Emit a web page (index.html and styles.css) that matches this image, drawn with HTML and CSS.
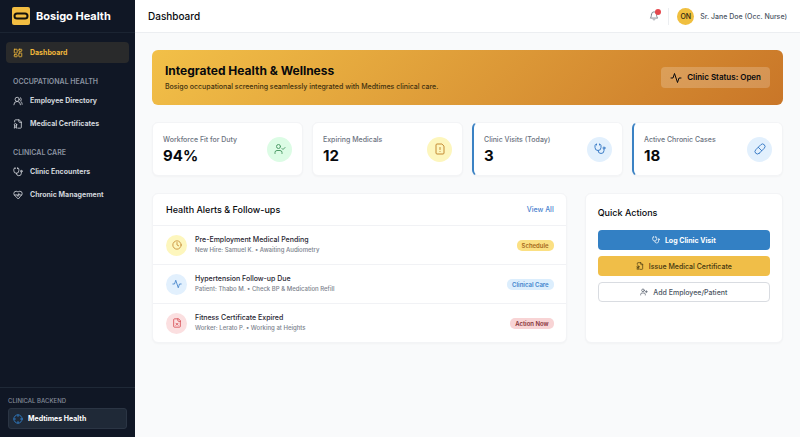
FILE: index.html
```html
<!DOCTYPE html>
<html lang="en">
<head>
<meta charset="utf-8">
<meta name="viewport" content="width=device-width, initial-scale=1">
<title>Bosigo Health</title>
<link rel="stylesheet" href="styles.css">
</head>
<body>
<svg class="sprite" aria-hidden="true">
  <symbol id="dashboard" viewBox="0 0 24 24"><rect x="3" y="3" width="7" height="9" rx="1"/><rect x="14" y="3" width="7" height="5" rx="1"/><rect x="14" y="12" width="7" height="9" rx="1"/><rect x="3" y="16" width="7" height="5" rx="1"/></symbol>
  <symbol id="users" viewBox="0 0 24 24"><path d="M18 21a8 8 0 0 0-16 0"/><circle cx="10" cy="8" r="5"/><path d="M22 20c0-3.370-2-6.500-4-8a5 5 0 0 0-.45-8.300"/></symbol>
  <symbol id="certificate" viewBox="0 0 24 24"><path d="M4 7V4a2 2 0 0 1 2-2h9l5 5v13a2 2 0 0 1-2 2h-6"/><path d="M14 2v4a2 2 0 0 0 2 2h4"/><circle cx="6" cy="14" r="3"/><path d="M8 16.500 9 22l-3-1.500L3 22l1-5.500"/></symbol>
  <symbol id="stethoscope" viewBox="0 0 24 24"><path d="M11 2v2M5 2v2M5 3H4a2 2 0 0 0-2 2v4a6 6 0 0 0 12 0V5a2 2 0 0 0-2-2h-1"/><path d="M8 15a6 6 0 0 0 12 0v-3"/><circle cx="20" cy="10" r="2"/></symbol>
  <symbol id="heart-pulse" viewBox="0 0 24 24"><path d="M19 14c1.490-1.460 3-3.210 3-5.500A5.500 5.500 0 0 0 16.500 3c-1.760 0-3 .5-4.500 2-1.500-1.500-2.740-2-4.500-2A5.500 5.500 0 0 0 2 8.500c0 2.300 1.500 4.050 3 5.500l7 7Z"/><path d="M3.220 12H9.500l.5-1 2 4.500 2-7 1.500 3.500h5.270"/></symbol>
  <symbol id="crosshair" viewBox="0 0 24 24"><circle cx="12" cy="12" r="10"/><path d="M22 12h-4M6 12H2M12 6V2M12 22v-4"/></symbol>
  <symbol id="bell" viewBox="0 0 24 24"><path d="M6 8a6 6 0 0 1 12 0c0 7 3 9 3 9H3s3-2 3-9"/><path d="M10.300 21a1.940 1.940 0 0 0 3.400 0"/></symbol>
  <symbol id="activity" viewBox="0 0 24 24"><path d="M22 12h-4l-3 9L9 3l-3 9H2"/></symbol>
  <symbol id="user-check" viewBox="0 0 24 24"><path d="M16 21v-2a4 4 0 0 0-4-4H6a4 4 0 0 0-4 4v2"/><circle cx="9" cy="7" r="4"/><path d="m16 11 2 2 4-4"/></symbol>
  <symbol id="user-plus" viewBox="0 0 24 24"><path d="M16 21v-2a4 4 0 0 0-4-4H6a4 4 0 0 0-4 4v2"/><circle cx="9" cy="7" r="4"/><path d="M19 8v6M22 11h-6"/></symbol>
  <symbol id="file-warning" viewBox="0 0 24 24"><path d="M15 2H6a2 2 0 0 0-2 2v16a2 2 0 0 0 2 2h12a2 2 0 0 0 2-2V7Z"/><path d="M12 9v4M12 17h.01"/></symbol>
  <symbol id="file-x" viewBox="0 0 24 24"><path d="M15 2H6a2 2 0 0 0-2 2v16a2 2 0 0 0 2 2h12a2 2 0 0 0 2-2V7Z"/><path d="M14 2v4a2 2 0 0 0 2 2h4M14.500 12.500l-5 5M9.500 12.500l5 5"/></symbol>
  <symbol id="pill" viewBox="0 0 24 24"><path d="m10.500 20.500 10-10a4.950 4.950 0 1 0-7-7l-10 10a4.950 4.950 0 1 0 7 7Z"/><path d="m8.500 8.500 7 7"/></symbol>
  <symbol id="clock" viewBox="0 0 24 24"><circle cx="12" cy="12" r="10"/><path d="M12 6v6l4 2"/></symbol>
</svg>

<div class="app">
  <aside class="sidebar">
    <div class="brand">
      <svg class="logo" viewBox="0 0 18 18" aria-hidden="true"><rect class="logo-tile" width="18" height="18" rx="2"/><rect class="logo-ring" x="2.500" y="6.500" width="13" height="5" rx="2.500"/></svg>
      <span>Bosigo Health</span>
    </div>
    <nav class="nav">
      <a class="nav-link active" href="#"><svg class="icon"><use href="#dashboard"/></svg>Dashboard</a>
      <h2 class="nav-label">OCCUPATIONAL HEALTH</h2>
      <a class="nav-link" href="#"><svg class="icon"><use href="#users"/></svg>Employee Directory</a>
      <a class="nav-link" href="#"><svg class="icon"><use href="#certificate"/></svg>Medical Certificates</a>
      <h2 class="nav-label">CLINICAL CARE</h2>
      <a class="nav-link" href="#"><svg class="icon"><use href="#stethoscope"/></svg>Clinic Encounters</a>
      <a class="nav-link" href="#"><svg class="icon"><use href="#heart-pulse"/></svg>Chronic Management</a>
    </nav>
    <div class="backend">
      <span class="backend-label">CLINICAL BACKEND</span>
      <a class="backend-link" href="#"><svg class="icon"><use href="#crosshair"/></svg>Medtimes Health</a>
    </div>
  </aside>

  <div class="page">
    <header class="topbar">
      <h1>Dashboard</h1>
      <div class="account">
        <button class="bell" type="button" aria-label="Notifications"><svg class="icon"><use href="#bell"/></svg><span class="dot"></span></button>
        <div class="user"><span class="avatar">ON</span><span>Sr. Jane Doe (Occ. Nurse)</span></div>
      </div>
    </header>

    <main class="content">
      <section class="banner">
        <div>
          <h2>Integrated Health &amp; Wellness</h2>
          <p>Bosigo occupational screening seamlessly integrated with Medtimes clinical care.</p>
        </div>
        <div class="status"><svg class="icon"><use href="#activity"/></svg>Clinic Status: Open</div>
      </section>

      <section class="stats">
        <article class="card stat"><div><h3>Workforce Fit for Duty</h3><p>94%</p></div><span class="badge green"><svg class="icon"><use href="#user-check"/></svg></span></article>
        <article class="card stat"><div><h3>Expiring Medicals</h3><p>12</p></div><span class="badge yellow"><svg class="icon"><use href="#file-warning"/></svg></span></article>
        <article class="card stat accent"><div><h3>Clinic Visits (Today)</h3><p>3</p></div><span class="badge blue"><svg class="icon"><use href="#stethoscope"/></svg></span></article>
        <article class="card stat accent"><div><h3>Active Chronic Cases</h3><p>18</p></div><span class="badge blue"><svg class="icon"><use href="#pill"/></svg></span></article>
      </section>

      <div class="panels">
        <section class="card alerts">
          <header class="alerts-head"><h2>Health Alerts &amp; Follow-ups</h2><a href="#">View All</a></header>
          <ul>
            <li><span class="badge yellow"><svg class="icon"><use href="#clock"/></svg></span><div class="alert-text"><h3>Pre-Employment Medical Pending</h3><p>New Hire: Samuel K. • Awaiting Audiometry</p></div><span class="tag tag-yellow">Schedule</span></li>
            <li><span class="badge blue"><svg class="icon"><use href="#activity"/></svg></span><div class="alert-text"><h3>Hypertension Follow-up Due</h3><p>Patient: Thabo M. • Check BP &amp; Medication Refill</p></div><span class="tag tag-blue">Clinical Care</span></li>
            <li><span class="badge red"><svg class="icon"><use href="#file-x"/></svg></span><div class="alert-text"><h3>Fitness Certificate Expired</h3><p>Worker: Lerato P. • Working at Heights</p></div><span class="tag tag-red">Action Now</span></li>
          </ul>
        </section>
        <section class="card actions">
          <h2>Quick Actions</h2>
          <button class="btn primary" type="button"><svg class="icon"><use href="#stethoscope"/></svg>Log Clinic Visit</button>
          <button class="btn gold" type="button"><svg class="icon"><use href="#certificate"/></svg>Issue Medical Certificate</button>
          <button class="btn plain" type="button"><svg class="icon"><use href="#user-plus"/></svg>Add Employee/Patient</button>
        </section>
      </div>
    </main>
  </div>
</div>
</body>
</html>
```
FILE: styles.css
```css
*, *::before, *::after { box-sizing: border-box; }
body {
  margin: 0;
  background: #f9fafb;
  color: #07090d;
  font: 500 7px/11px Inter, "Liberation Sans", sans-serif;
}
h1, h2, h3, p, ul { margin: 0; padding: 0; }
ul { list-style: none; }
a { color: inherit; text-decoration: none; }
button { font: inherit; cursor: pointer; }
.sprite { position: absolute; width: 0; height: 0; }
.icon {
  flex: none;
  width: 10px;
  height: 10px;
  fill: none;
  stroke: currentColor;
  stroke-width: 2;
  stroke-linecap: round;
  stroke-linejoin: round;
}

.app { display: grid; grid-template-columns: 135px 1fr; min-height: 100vh; }

/* Sidebar */
.sidebar { display: flex; flex-direction: column; background: #101725; color: #d1d5db; }
.brand {
  display: flex;
  align-items: center;
  gap: 6px;
  height: 33px;
  padding: 0 12px;
  border-bottom: 1px solid #1b2432;
  color: #fff;
  font-size: 11px;
  font-weight: 700;
}
.logo { width: 18px; height: 18px; }
.logo-tile { fill: #f2bd42; }
.logo-ring { fill: #f2bd42; stroke: #14120c; stroke-width: 2; }
.nav { display: flex; flex-direction: column; gap: 2px; padding: 9px 6px; }
.nav-link {
  display: flex;
  align-items: center;
  gap: 7px;
  height: 21px;
  padding: 0 7px;
  border-radius: 4px;
  font-weight: 700;
}
.nav-link.active { background: #292a2b; color: #f2b93b; }
.nav-label {
  padding: 12px 7px 1px;
  color: #8b93a1;
  font-size: 7px;
  line-height: 10px;
  font-weight: 600;
}
.backend {
  display: flex;
  flex-direction: column;
  gap: 2px;
  margin-top: auto;
  padding: 7px 8px 8px;
  border-top: 1px solid #1f2937;
}
.backend-label { color: #848c9a; font-size: 6px; }
.backend-link {
  display: flex;
  align-items: center;
  gap: 5px;
  height: 21px;
  padding: 0 4px;
  border: 1px solid #2b3544;
  border-radius: 3px;
  background: #1f2937;
  color: #fff;
  font-weight: 700;
}
.backend-link .icon { color: #3182ce; }

/* Top bar */
.topbar {
  display: flex;
  align-items: center;
  justify-content: space-between;
  height: 33px;
  padding: 0 13px;
  border-bottom: 1px solid #eceef1;
  background: #fff;
}
.topbar h1 { font-size: 10px; font-weight: 500; }
.account { display: flex; align-items: center; gap: 9px; }
.bell { position: relative; display: flex; padding: 0; border: 0; background: none; color: #737982; }
.dot { position: absolute; top: -2px; right: -2px; width: 6px; height: 6px; border-radius: 50%; background: #e5484d; }
.user {
  display: flex;
  align-items: center;
  gap: 6px;
  padding-left: 8px;
  border-left: 1px solid #eceef1;
  color: #4b5563;
}
.avatar {
  display: grid;
  place-items: center;
  width: 17px;
  height: 17px;
  border-radius: 50%;
  background: #f0bf3f;
  color: #2b2410;
}

/* Content */
.content { display: flex; flex-direction: column; gap: 17px; padding: 17px; }
.banner {
  display: flex;
  align-items: center;
  justify-content: space-between;
  min-height: 55px;
  padding: 12px 13px;
  border-radius: 6px;
  background: linear-gradient(135deg, #f2c048, #c97628);
}
.banner h2 { font-size: 12px; line-height: 18px; font-weight: 700; }
.banner p { color: #40300f; line-height: 13px; }
.status {
  display: flex;
  align-items: center;
  gap: 5px;
  height: 21px;
  padding: 0 9px;
  border-radius: 4px;
  background: rgb(255 255 255 / 20%);
  font-size: 8px;
  font-weight: 600;
}
.status .icon { width: 12px; height: 12px; }

.card {
  border: 1px solid #f3f4f6;
  border-radius: 6px;
  background: #fff;
  box-shadow: 0 1px 2px rgb(0 0 0 / 3%);
}
.stats { display: grid; grid-template-columns: repeat(4, 1fr); gap: 9px; }
.stat { display: flex; align-items: center; justify-content: space-between; height: 54px; padding: 0 10px; }
.stat.accent { border-left: 2px solid #3b82c4; }
.stat h3 { color: #6b7280; font-size: 7px; line-height: 13px; font-weight: 500; }
.stat p { font-size: 15px; line-height: 20px; font-weight: 700; }
.badge { display: grid; flex: none; place-items: center; width: 21px; height: 21px; border-radius: 50%; }
.stat .badge { width: 25px; height: 25px; }
.stat .icon { width: 12px; height: 12px; }
.green { background: #dcfce5; color: #4f9d69; }
.yellow { background: #fdf6bd; color: #c48a32; }
.blue { background: #e2f0fd; color: #3f7fc8; }
.red { background: #fbdfe0; color: #d64b50; }

.panels { display: grid; grid-template-columns: repeat(3, 1fr); gap: 18px; }
.alerts { grid-column: span 2; }
.alerts-head {
  display: flex;
  align-items: center;
  justify-content: space-between;
  height: 31px;
  padding: 0 12px 0 13px;
}
.alerts h2, .actions h2 { font-size: 9px; line-height: 14px; font-weight: 500; }
.alerts-head a { color: #4a7fce; }
.alerts li {
  display: flex;
  align-items: center;
  gap: 8px;
  min-height: 39px;
  padding: 0 12px 0 13px;
  border-top: 1px solid #f1f2f5;
}
.alert-text { flex: 1; }
.alert-text h3 { color: #1f2430; font-size: 7px; line-height: 10px; font-weight: 500; }
.alert-text p { color: #7b818c; font-size: 6px; line-height: 10px; }
.tag { padding: 0 5px; border-radius: 5px; font-size: 6px; font-weight: 600; }
.tag-yellow { background: #fbe083; color: #a66a1d; }
.tag-blue { background: #dceefd; color: #3c83cc; }
.tag-red { background: #f8d4d5; color: #853237; }

.actions { display: flex; flex-direction: column; gap: 6px; padding: 12px; }
.actions h2 { margin-bottom: 4px; }
.btn {
  display: flex;
  align-items: center;
  justify-content: center;
  gap: 5px;
  height: 20px;
  padding: 0 8px;
  border: 1px solid transparent;
  border-radius: 4px;
  font-weight: 500;
}
.btn .icon { width: 8px; height: 8px; }
.primary { background: #3380c4; color: #fff; font-weight: 700; }
.gold { background: #f0be48; color: #43350f; }
.plain { border-color: #d9dce1; background: #fff; color: #4b5563; }
```
